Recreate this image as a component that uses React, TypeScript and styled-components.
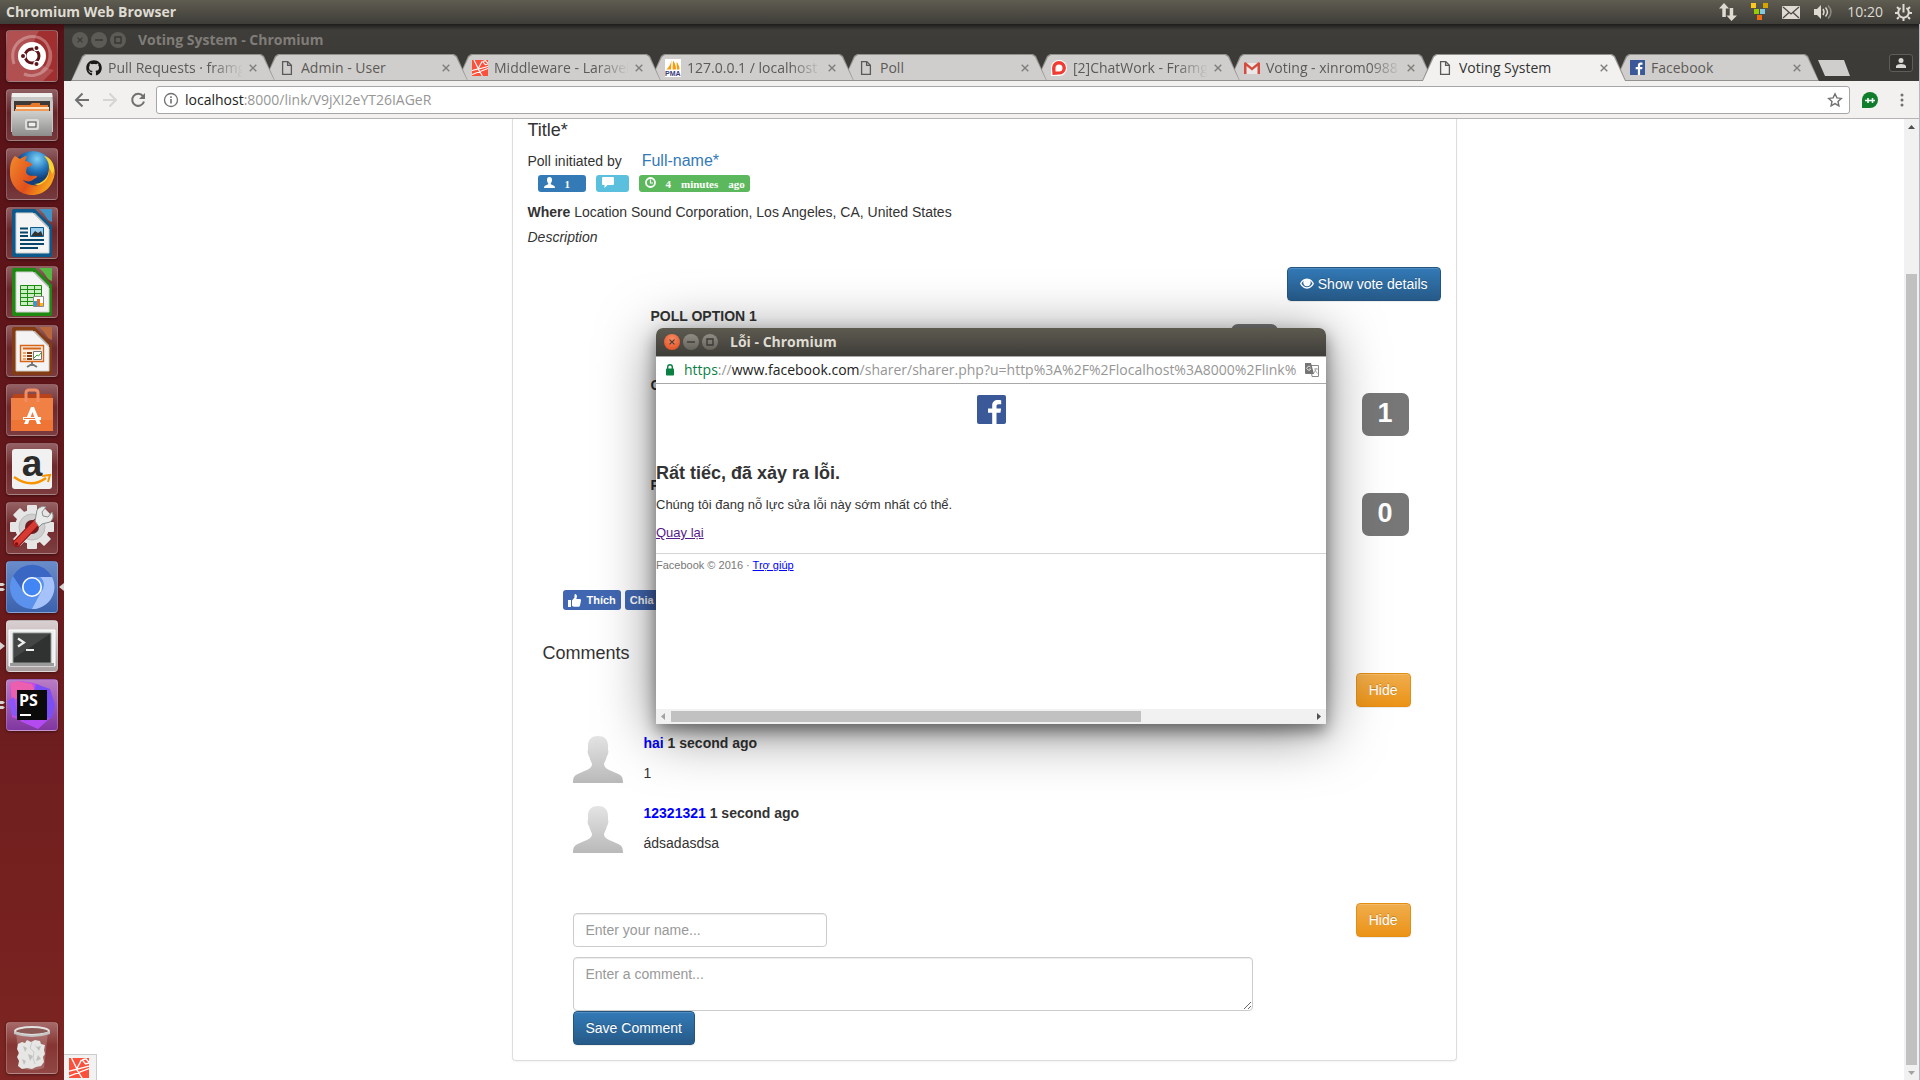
import React from "react";
import styled, { createGlobalStyle, css } from "styled-components";
import { FaGithub } from "react-icons/fa";

const uiFont = `"Open Sans", "Noto Sans", sans-serif`;
const pageFont = `"Liberation Sans", Arial, sans-serif`;

const GlobalStyle = createGlobalStyle`
  * { box-sizing: border-box; }
  body { margin: 0; background: #fff; font-family: ${pageFont}; overflow: hidden; }
  button, input, textarea { font-family: inherit; margin: 0; }
  button { cursor: pointer; }
  svg { display: block; flex: none; }
`;

/* ---------- desktop shell ---------- */

const Desktop = styled.div`
  position: relative;
  height: 100vh;
  display: grid;
  grid-template-rows: 24px minmax(0, 1fr);
  grid-template-columns: 64px minmax(0, 1fr);
`;

const MenuBar = styled.header`
  grid-column: 1 / -1;
  display: flex;
  align-items: center;
  justify-content: space-between;
  padding: 0 8px 0 6px;
  background: linear-gradient(#5f5c51, #3e3d38);
  color: #dfdbd2;
  font: 700 14px/24px ${uiFont};
`;

const Indicators = styled.div`
  display: flex;
  align-items: center;
  gap: 14px;
  font-weight: 400;
  font-size: 14px;
`;

const Clock = styled.span`
  margin-right: -2px;
`;

const Launcher = styled.nav`
  display: flex;
  flex-direction: column;
  gap: 7px;
  padding: 6px 0 6px;
  background: linear-gradient(#3f0c10, #581217 8px, #62171b 40%, #7d2522);
`;

const Slot = styled.div<{ $last?: boolean }>`
  display: grid;
  grid-template-columns: 6px 52px 6px;
  align-items: center;
  ${(p) => p.$last && css`margin-top: auto;`}
`;

const Tile = styled.button<{ $bg?: string }>`
  grid-column: 2;
  width: 52px;
  height: 52px;
  padding: 0;
  border: 1px solid rgba(255, 255, 255, 0.2);
  border-radius: 4px;
  overflow: hidden;
  background: ${(p) => p.$bg || "linear-gradient(rgba(255,255,255,.32), rgba(255,255,255,.08) 45%, rgba(255,255,255,.16))"};
  box-shadow: 0 1px 3px rgba(0, 0, 0, 0.4);
  svg { margin: -1px; }
`;

const Mark = styled.svg<{ $col: number }>`
  grid-column: ${(p) => p.$col};
  grid-row: 1;
`;

/* ---------- main browser window ---------- */

const Browser = styled.main`
  display: flex;
  flex-direction: column;
  min-height: 0;
  background: #fff;
  border-right: 1px solid #b9b7bd;
`;

const TitleBar = styled.div`
  display: flex;
  align-items: center;
  gap: 3px;
  height: 30px;
  padding: 2px 8px 0 8px;
  background: linear-gradient(#1d1c1a, #3e3d3a 6px, #3c3b37);
  color: #807d78;
  font: 700 14px/20px ${uiFont};
`;

const Caption = styled.span`
  margin-left: 9px;
`;

const WindowButton = styled.button<{ $bg: string; $line: string }>`
  display: grid;
  place-items: center;
  width: 16px;
  height: 16px;
  padding: 0;
  border: 0;
  border-radius: 50%;
  background: ${(p) => p.$bg};
  color: ${(p) => p.$line};
`;

const TabStrip = styled.div`
  display: flex;
  align-items: flex-end;
  height: 27px;
  padding: 0 6px 0 7px;
  background: #3c3b37;
`;

const TabShape = styled.div<{ $active?: boolean; $z: number }>`
  position: relative;
  z-index: ${(p) => p.$z};
  flex: 0 1 204px;
  min-width: 0;
  height: 27px;
  margin-right: -11px;
  display: flex;
  align-items: center;
  gap: 6px;
  padding: 0 18px 0 15px;
  color: ${(p) => (p.$active ? "#333" : "#5c5a57")};
  font: 400 14px/20px ${uiFont};
  &::before, &::after {
    content: "";
    position: absolute;
    inset: 0;
    z-index: -1;
    background: #94928f;
    clip-path: polygon(0 100%, 11px 2px, 14px 0, calc(100% - 14px) 0, calc(100% - 11px) 2px, 100% 100%);
  }
  &::after {
    inset: 1px 1px ${(p) => (p.$active ? 0 : 1)}px 1px;
    background: ${(p) => (p.$active ? "#f2f1f0" : "#d0cecc")};
  }
  isolation: isolate;
`;

const TabTitle = styled.span<{ $fade?: boolean }>`
  flex: 1;
  min-width: 0;
  overflow: hidden;
  white-space: nowrap;
  ${(p) => p.$fade && css`mask-image: linear-gradient(90deg, #000 calc(100% - 32px), transparent);`}
`;

const PlainButton = styled.button`
  display: grid;
  place-items: center;
  padding: 0;
  border: 0;
  background: none;
  color: inherit;
`;

const TabClose = styled(PlainButton)`
  color: #807e7b;
`;

const NewTab = styled.button`
  width: 32px;
  height: 16px;
  margin: 0 auto 5px 10px;
  padding: 0;
  border: 0;
  background: #d0cecc;
  clip-path: polygon(0 0, 26px 0, 100% 100%, 7px 100%);
`;

const Profile = styled.button`
  display: grid;
  place-items: center;
  width: 24px;
  height: 18px;
  margin-bottom: 9px;
  padding: 0;
  border: 1px solid #5e5d59;
  border-radius: 3px;
  background: #33322f;
`;

const Toolbar = styled.div`
  display: flex;
  align-items: center;
  gap: 12px;
  height: 38px;
  padding: 0 13px 0 10px;
  background: #f2f1f0;
  border-bottom: 1px solid #b6b4b4;
`;

const Omnibox = styled.div`
  flex: 1;
  display: flex;
  align-items: center;
  gap: 6px;
  height: 28px;
  margin-left: -2px;
  padding: 0 6px 0 6px;
  border: 1px solid #a6a6a6;
  border-radius: 3px;
  background: #fff;
`;

const Address = styled.div`
  flex: 1;
  min-width: 0;
  overflow: hidden;
  white-space: nowrap;
  color: #969696;
  font: 400 14px/20px ${uiFont};
  b { font-weight: 400; color: #222; }
  i { font-style: normal; color: #0b8043; }
`;

const Viewport = styled.div`
  position: relative;
  flex: 1;
  min-height: 0;
  display: flex;
`;

const Page = styled.div`
  flex: 1;
  min-width: 0;
  overflow: hidden;
  font-size: 14px;
  line-height: 20px;
  color: #333;
`;

const VScroll = styled.div`
  display: flex;
  flex-direction: column;
  align-items: center;
  justify-content: space-between;
  width: 15px;
  padding: 4px 0;
  background: #f1f1f1;
`;

const VThumb = styled.div`
  flex: 1;
  width: 11px;
  margin: 144px 0 6px;
  background: #c1c1c1;
`;

const StatusChip = styled.div`
  position: absolute;
  left: 0;
  bottom: 0;
  padding: 3px 7px 2px 5px;
  border: 1px solid #ccc;
  border-width: 1px 1px 0 0;
  background: #f2f2f2;
`;

/* ---------- poll page ---------- */

const Panel = styled.section`
  max-width: 945px;
  margin: 0 auto;
  padding: 0 15px 15px;
  border: 1px solid #ddd;
  border-top: 0;
  border-radius: 0 0 4px 4px;
  box-shadow: 0 1px 2px rgba(0, 0, 0, 0.05);
`;

const PollTitle = styled.h4`
  margin: 0;
  font-weight: 400;
  font-size: 18px;
  line-height: 22px;
`;

const Author = styled.div`
  display: flex;
  gap: 20px;
  margin-top: 10px;
  a { color: #337ab7; font-size: 16px; text-decoration: none; }
`;

const Labels = styled.div`
  display: flex;
  gap: 10px;
  margin-top: 4px;
  padding-left: 10px;
`;

const Label = styled.span<{ $bg: string; $w: number }>`
  display: flex;
  align-items: center;
  gap: 10px;
  min-width: ${(p) => p.$w}px;
  height: 17px;
  padding: 0 5px 0 6px;
  border-radius: 3px;
  background: ${(p) => p.$bg};
  color: #fff;
  font: 700 11px/17px "Liberation Serif", serif;
  svg { margin-top: -2px; }
  span { padding-top: 2px; }
`;

const Where = styled.p`
  margin: 10px 0 5px;
`;

const Description = styled.p`
  margin: 0 0 20px;
  font-style: italic;
`;

const Right = styled.div<{ $inset?: number }>`
  display: flex;
  justify-content: flex-end;
  padding-right: ${(p) => p.$inset || 0}px;
`;

const Button = styled.button<{ $tone: "primary" | "warning" }>`
  display: inline-flex;
  align-items: center;
  gap: 4px;
  height: 34px;
  padding: 0 12px;
  border: 1px solid ${(p) => (p.$tone === "primary" ? "#245580" : "#e38d13")};
  border-radius: 4px;
  background: ${(p) => (p.$tone === "primary" ? "linear-gradient(#337ab7, #265a88)" : "linear-gradient(#f0ad4e, #eb9316)")};
  box-shadow: inset 0 1px 0 rgba(255, 255, 255, 0.15), 0 1px 1px rgba(0, 0, 0, 0.075);
  color: #fff;
  font-size: 14px;
  line-height: 20px;
  text-shadow: 0 -1px 0 rgba(0, 0, 0, 0.2);
`;

const Options = styled.div`
  margin: 5px 0 15px;
`;

const Option = styled.div<{ $height: number; $inset: number }>`
  display: flex;
  justify-content: space-between;
  align-items: flex-start;
  height: ${(p) => p.$height}px;
  padding: 0 ${(p) => p.$inset}px 0 123px;
  font-weight: 700;
`;

const Votes = styled.span`
  width: 47px;
  height: 43px;
  margin-top: 18px;
  border-radius: 7px;
  background: #777;
  color: #fff;
  font-size: 27px;
  line-height: 40px;
  text-align: center;
`;

const Social = styled.div`
  display: flex;
  gap: 4px;
  margin-left: 35px;
`;

const SocialButton = styled.button`
  display: flex;
  align-items: center;
  gap: 6px;
  height: 20px;
  padding: 0 5px;
  border: 0;
  border-radius: 3px;
  background: #4267b2;
  color: #fff;
  font-weight: 700;
  font-size: 11px;
  line-height: 20px;
`;

const CommentsTitle = styled.h4`
  margin: 33px 0 10px 15px;
  font-weight: 400;
  font-size: 18px;
  line-height: 20px;
`;

const CommentList = styled.ul`
  display: grid;
  gap: 20px;
  margin: 26px 0 50px;
  padding: 0 0 0 45px;
  list-style: none;
`;

const Comment = styled.li`
  display: grid;
  grid-template-columns: 50px 1fr;
  gap: 21px;
  align-items: end;
  p { margin: 10px 0 0; }
  em { color: #00f; font-style: normal; }
`;

const Form = styled.form`
  padding-left: 45px;
`;

const FormTop = styled.div`
  display: flex;
  justify-content: space-between;
  padding-right: 30px;
`;

const field = css`
  display: block;
  padding: 6px 12px;
  border: 1px solid #ccc;
  border-radius: 4px;
  background: #fff;
  box-shadow: inset 0 1px 1px rgba(0, 0, 0, 0.075);
  font-size: 14px;
  line-height: 20px;
  &::placeholder { color: #999; opacity: 1; }
`;

const NameInput = styled.input`
  ${field}
  width: 254px;
  height: 34px;
  margin-top: 10px;
`;

const CommentInput = styled.textarea`
  ${field}
  width: calc(100% - 188px);
  height: 54px;
  margin-top: 10px;
`;

/* ---------- popup window ---------- */

const Popup = styled.aside`
  position: absolute;
  left: 656px;
  top: 328px;
  z-index: 20;
  display: flex;
  flex-direction: column;
  width: 670px;
  height: 396px;
  border-radius: 7px 7px 0 0;
  background: #fff;
  box-shadow: 0 7px 16px rgba(0, 0, 0, 0.42), 0 8px 56px rgba(0, 0, 0, 0.5);
  color: #333;
`;

const PopupBar = styled.div`
  display: flex;
  align-items: center;
  gap: 3px;
  height: 28px;
  padding: 0 8px;
  border-radius: 7px 7px 0 0;
  background: linear-gradient(#5d5a50, #3e3d38);
  color: #dfdbd2;
  font: 700 14px/20px ${uiFont};
`;

const PopupUrl = styled.div`
  display: flex;
  align-items: center;
  gap: 8px;
  height: 28px;
  padding: 0 7px 0 8px;
  border: solid #a9a9a9;
  border-width: 1px 0;
`;

const PopupBody = styled.div`
  flex: 1;
  font-size: 13px;
  line-height: 20px;
  p { margin: 0 0 8px; }
`;

const FbHeader = styled.div`
  display: flex;
  justify-content: center;
  padding: 11px 0 39px;
`;

const ErrorTitle = styled.h2`
  margin: 0 0 12px;
  font-size: 18px;
  line-height: 20px;
`;

const BackLink = styled.a`
  color: #551a8b;
`;

const PopupFooter = styled.footer`
  margin-top: 10px;
  padding-top: 1px;
  border-top: 1px solid #d5d5d5;
  color: #777;
  font-size: 11px;
  a { color: #00f; }
`;

const HScroll = styled.div`
  display: flex;
  align-items: center;
  height: 15px;
  padding: 0 5px;
  background: #f1f1f1;
`;

const HThumb = styled.div`
  width: 470px;
  height: 11px;
  margin: 0 auto 0 6px;
  background: #c1c1c1;
`;

/* ---------- small drawings ---------- */

const CloseGlyph = ({ size = 8 }: { size?: number }) => (
  <svg width={size} height={size} viewBox="0 0 8 8" stroke="currentColor" strokeWidth="1.4"><path d="M.7.7l6.6 6.6M7.3.7L.7 7.3" /></svg>
);

const WindowButtons = ({ live }: { live?: boolean }) => {
  const bg = live ? "linear-gradient(#908d84,#65635b)" : "#5d5b56";
  const line = live ? "#3b3a36" : "#373632";
  return (
    <>
      <WindowButton aria-label="Close" $bg={live ? "radial-gradient(circle at 50% 30%,#f78a63,#df4a1b)" : bg} $line={line}>
        <CloseGlyph size={6} />
      </WindowButton>
      <WindowButton aria-label="Minimize" $bg={bg} $line={line}>
        <svg width="8" height="8"><path d="M0 4h8" stroke="currentColor" strokeWidth="1.4" /></svg>
      </WindowButton>
      <WindowButton aria-label="Maximize" $bg={bg} $line={line}>
        <svg width="8" height="8"><path d="M1 1h6v6H1z" fill="none" stroke="currentColor" strokeWidth="1.4" /></svg>
      </WindowButton>
    </>
  );
};

const DocIcon = () => (
  <svg width="16" height="16" viewBox="0 0 16 16" fill="none" stroke="#5a5a5a" strokeWidth="1.3"><path d="M3.6 1.6h5.2l3.6 3.6v9.2H3.6zM8.6 1.8v3.6h3.7" /></svg>
);

const LaravelIcon = ({ size = 16 }: { size?: number }) => (
  <svg width={size} height={size} viewBox="0 0 16 16">
    <path fill="#fb503b" d="M0 0h16v16H0z" />
    <path fill="none" stroke="#fff" strokeWidth="1.1" d="M2 0l4.500 9L16 6.500M0 10.500l6-1.500 4.500 7M0 14.500l16-6M10.500 1.500l3-.8L16 3.500M10.500 1.500l2.800 3.200L16 4M6 9l4-7.500" />
  </svg>
);

const PmaIcon = () => (
  <svg width="16" height="18" viewBox="0 0 16 18">
    <path fill="#fff" d="M0 0h16v18H0z" />
    <path fill="#f89c0e" d="M6.5 1C6 5 4 8 1.5 10.5H6zM8 1.5c2 2.500 3 5 3 9H7.500zM11.500 3c2 2 3 4.500 3 7.500H12z" />
    <text x="0" y="17" fontSize="7" fontWeight="700" fill="#3a3a7a" fontFamily="Liberation Sans">PMA</text>
  </svg>
);

const ChatworkIcon = () => (
  <svg width="16" height="16" viewBox="0 0 16 16">
    <path fill="#fff" d="M8 0a8 8 0 018 8 8 8 0 01-8 8H0V8a8 8 0 018-8z" />
    <path fill="#f03c32" fillRule="evenodd" d="M8 1a7 7 0 017 7 7 7 0 01-7 6.500L1.500 15 1 8a7 7 0 017-7zm0 3.500A3.500 3.500 0 004.500 8v3.500H8a3.500 3.500 0 000-7z" />
  </svg>
);

const GmailIcon = () => (
  <svg width="16" height="16" viewBox="0 0 16 16">
    <path fill="#e8e8e8" d="M1 3h14v11H1z" />
    <path fill="#d54b3d" d="M0 3.500C0 2.500 1.500 2 2.300 2.700L8 7.500l5.700-4.800C14.500 2 16 2.500 16 3.500V14h-2.500V6L8 10.500 2.500 6v8H0z" />
  </svg>
);

const FbIcon = ({ size, r = 0 }: { size: number; r?: number }) => (
  <svg width={size} height={size} viewBox="0 0 29 29">
    <rect width="29" height="29" rx={r} fill="#3b5998" />
    <path fill="#fff" d="M15.200 29V17.800h-4.200V13.500h4.200v-3c0-3.600 2.300-5.500 5.600-5.500 1.600 0 3 .1 3.400.2v4h-2.500c-1.900 0-2.200.9-2.200 2.200v2.100h4.600l-.6 4.300h-4v11.200z" />
  </svg>
);

const svgTile = { width: 52, height: 52, viewBox: "0 0 52 52" };

const UbuntuArt = () => (
  <svg {...svgTile}>
    <path d="M0 0h52v52H0z" fill="#a12f30" />
    <path d="M0 0h34A24 24 0 0048 40l-12 12H0z" fill="#fff" opacity=".16" />
    <path d="M8 34C2 14 20 2 34 8c12 6 14 24 2 34M44 20c4 18-12 30-26 24" fill="none" stroke="#fff" opacity=".3" strokeWidth="3" />
    <circle cx="26" cy="26" r="14" fill="#fff" />
    <circle cx="26" cy="26" r="7" fill="none" stroke="#5d1519" strokeWidth="3" />
    <g stroke="#fff" strokeWidth="1.200" fill="#5d1519"><circle cx="17" cy="26" r="2.600" /><circle cx="30.500" cy="18" r="2.600" /><circle cx="30.500" cy="34" r="2.600" /></g>
  </svg>
);

const FilesArt = () => (
  <svg {...svgTile}>
    <defs><linearGradient id="steel" x2="0" y2="1"><stop stopColor="#d0d0cf" /><stop offset="1" stopColor="#8d8d8c" /></linearGradient></defs>
    <path d="M6 4h40l1 9v30H5V13z" fill="#c7c7c6" /><path d="M6 4h40l.5 4h-41z" fill="#efefee" />
    <path d="M8 12h36v11H8z" fill="#3d3a38" />
    <path d="M10 16h14l2-2h8v2h8v8H10z" fill="#e8782c" /><path d="M10 18h33v2H10z" fill="#fbe2c4" /><path d="M9 20h34v3H9z" fill="#f09a55" />
    <path d="M6 22h40v25H8q-2 0-2-2z" fill="url(#steel)" />
    <rect x="19" y="30" width="14" height="11" rx="2" fill="#dcdcdb" /><rect x="22" y="33" width="8" height="5" fill="#eee" stroke="#444" />
  </svg>
);

const FirefoxArt = () => (
  <svg {...svgTile}>
    <defs>
      <radialGradient id="globe" cx=".6" cy=".2"><stop stopColor="#7fd3f5" /><stop offset=".6" stopColor="#2274bb" /><stop offset="1" stopColor="#123e7c" /></radialGradient>
      <linearGradient id="fox" x2="1" y2=".5"><stop stopColor="#f28a2c" /><stop offset=".6" stopColor="#e1501c" /><stop offset="1" stopColor="#f7a01b" /></linearGradient>
    </defs>
    <circle cx="27" cy="23" r="20" fill="url(#globe)" />
    <path d="M38 8c4 4 5 8 5 12 0 10-7 16-15 16C40 40 50 34 48.500 22 48 15 44 9 38 8z" fill="#fbd22f" />
    <path d="M43 20c1 13-8 19-17 17-6-1-9-5-9-5 4 2 8 2 11-1 1-1 3-1 3-3-3-1-7 1-10-2-2-3 0-5 0-7 2 0 5-1 5-3-2-1-4-3-7-3l2-5c-3 0-5 2-7 3L9 8C4 13 4 20 4 25c0 13 10 22 22 22 13 0 23-10 22-24-1 2-2 3-2 3-1-3-2-5-3-6z" fill="url(#fox)" />
  </svg>
);

const OfficeArt = ({ c, light, children }: { c: string; light: string; children: React.ReactNode }) => (
  <svg {...svgTile}>
    <path d="M8 2h21l17 17v29q0 2-2 2H8q-2 0-2-2V4q0-2 2-2z" fill={c} />
    <path d="M33 2h13v13q-4-1-6-5t-7-8z" fill={light} />
    <path d="M10 6h17l16 16v24H10z" fill="#f4f4f4" stroke="#cfcfcf" /><path d="M27 6l16 16V20L29 6z" fill="#bbb" />
    {children}
  </svg>
);

const WriterArt = () => (
  <OfficeArt c="#0c5a8d" light="#3f93c6">
    <path d="M14 21.500h8M14 25.500h8M14 29h8M14 33h24M14 37h24M14 41h18" stroke="#074668" strokeWidth="2" />
    <path d="M24.500 20.500h13v9h-13z" fill="#9ccdea" stroke="#0c5a8d" /><path d="M25 29l4-5 3 2 3-2 2 5z" fill="#333" />
  </OfficeArt>
);

const CalcArt = () => (
  <OfficeArt c="#1f8a12" light="#55b944">
    <path d="M14.500 19.500h21v20h-21z" fill="#c9eec1" stroke="#1f8a12" />
    <path d="M14 23.500h22M14 27.500h22M14 31.500h22M14 35.500h22M21.500 19v21M28.500 19v21" stroke="#1f8a12" />
    <path d="M27.500 30.500h10v10h-10z" fill="#fff" stroke="#888" /><path d="M28 35h3v5h-3z" fill="#2b9be3" /><path d="M31 33h3v7h-3z" fill="#e96a23" /><path d="M34 37h3v3h-3z" fill="#f2bb19" />
  </OfficeArt>
);

const ImpressArt = () => (
  <OfficeArt c="#843c12" light="#b8683a">
    <path d="M14.500 20.500h23v16h-23z" fill="#fdeee2" stroke="#d4661b" strokeWidth="1.400" />
    <path d="M17 23.500h18" stroke="#d4661b" strokeWidth="2" /><path d="M17 28h3M17 31h3M17 34h3" stroke="#e98a4c" strokeWidth="1.500" /><path d="M21 28h5M21 31h5M21 34h5" stroke="#843c12" strokeWidth="2" />
    <path d="M27.500 26.500h8v8h-8z" fill="#fff" stroke="#777" /><path d="M28 33l3-3 1.500 1 2.500-3" fill="none" stroke="#2fa52f" /><path d="M26 37v2l-5 3M26 39l5 3" fill="none" stroke="#777" strokeWidth="2" />
  </OfficeArt>
);

const SoftwareArt = () => (
  <svg {...svgTile}>
    <path d="M8 10h37l2 5H5z" fill="#b6431a" /><path d="M5 14h42v33H5z" fill="#ee7536" /><path d="M5 14h42v22H5z" fill="#f2874d" opacity=".6" />
    <path d="M20 18V9q0-3 3-3h6q3 0 3 3v9" fill="none" stroke="#f08d64" strokeWidth="3" />
    <path d="M22 40l-4 0 7-17h3l7 17h-4l-4.500-12z" fill="#fff" /><path d="M17 33h18v3H17z" fill="#fff" />
    <path d="M18 34.500h11" stroke="#ee7536" strokeWidth="1.200" />
  </svg>
);

const AmazonArt = () => (
  <svg {...svgTile}>
    <rect x="6" y="6" width="40" height="40" rx="3" fill="#f1f1f1" />
    <text x="26" y="33" textAnchor="middle" fontSize="37" fontWeight="700" fill="#2b2b2b" fontFamily="Liberation Sans">a</text>
    <path d="M8 34q17 12 32 1" fill="none" stroke="#f79400" strokeWidth="2.400" /><path d="M36 33l8-1-2 7" fill="none" stroke="#f79400" strokeWidth="2" />
  </svg>
);

const SettingsArt = () => (
  <svg {...svgTile}>
    <g transform="translate(26 25)" fill="#e6e6e6">
      {[0, 45, 90, 135].map((a) => <rect key={a} x="-5" y="-22" width="10" height="44" rx="1" transform={`rotate(${a})`} />)}
      <circle r="17" /><circle r="13" fill="#cfcfcf" stroke="#bbb" /><circle r="7" fill="#6c1f24" />
    </g>
    <path d="M11 41l19-20" stroke="#8d1212" strokeWidth="8" strokeLinecap="round" /><path d="M11 41l19-20" stroke="#d63a33" strokeWidth="6" strokeLinecap="round" />
    <path d="M29 19l2-11q4-5 9-3l-4 5 1 4 5 1 4-5q3 6-2 10l-8 2-3 3z" fill="#e9eaea" stroke="#8a8f8d" />
    <circle cx="10.500" cy="42" r="1.800" fill="#7c1010" />
  </svg>
);

const ChromiumArt = () => (
  <svg {...svgTile}>
    <circle cx="26" cy="26" r="22" fill="#5b92ee" />
    <path d="M7 15A22 22 0 0146 16H26a10 10 0 00-9 14z" fill="#3a66c4" />
    <path d="M46 16a22 22 0 01-20 32l9-17a10 10 0 00-1-15z" fill="#a5c3fa" />
    <circle cx="26" cy="26" r="10" fill="#fff" /><circle cx="26" cy="26" r="8.400" fill="#4285f4" />
  </svg>
);

const TerminalArt = () => (
  <svg {...svgTile}>
    <path d="M3 10h46v36H3z" fill="#eee" stroke="#fff" /><path d="M4 43h44v3H4z" fill="#9a9a9a" /><path d="M7 13h38v30H7z" fill="#2f3231" stroke="#999" />
    <path d="M8 14h36L8 38z" fill="#fff" opacity=".1" />
    <path d="M12 18.500l6 4-6 4M20 30h8" fill="none" stroke="#eee" strokeWidth="2.200" />
  </svg>
);

const PhpStormArt = () => (
  <svg {...svgTile}>
    <path d="M4 4l10-2 14 2 6 2-4 38-14-2-10-4z" fill="#c44be8" /><path d="M4 4l8-2 14 3 4 8-24 8z" fill="#ec5fae" />
    <path d="M30 5l14 5 5 16-3 12-14 11-14-6z" fill="#7b4ef5" /><path d="M2 22l6-4 4 20-6-2z" fill="#8a56f7" /><path d="M14 42l30-3-12 11z" fill="#b44bf0" />
    <path d="M11 11h30v30H11z" fill="#0b0b0b" />
    <text x="13" y="27" fontSize="16" fontWeight="700" fill="#fff" fontFamily="Open Sans">PS</text><path d="M14 36h11" stroke="#fff" strokeWidth="2" />
  </svg>
);

const TrashArt = () => (
  <svg {...svgTile}>
    <path d="M10 10h32l-4 36q-12 4-24 0z" fill="#fff" opacity=".2" />
    <path d="M12 22l4-2 3 1 2-3 4 2 4-2 5 1 1 3 4 1-1 5 1 4-2 3 1 5-3 4-5 1-4 2-5-1-5 1-4-3 1-5-2-4 2-4-2-4z" fill="#e6e6e4" />
    <path d="M17 24l4 2-2 4zM28 22l3 3 4-1-2 5zM22 32l5 2-3 5zM32 33l3 4-5 2zM16 37l4 2-2 4z" fill="#bfc0be" />
    <path d="M26 20l-2 6 4 4-1 6 2 6" fill="none" stroke="#cacac8" />
    <ellipse cx="26" cy="9" rx="17" ry="4" fill="#8b5a57" stroke="#e2e2e0" strokeWidth="2" />
    <path d="M8 9q18 8 36 0v3q-18 6-36 0z" fill="#c6c7c5" />
  </svg>
);

const Avatar = () => (
  <svg width="50" height="47" viewBox="0 0 50 47">
    <defs><linearGradient id="person" x2="0" y2="1"><stop stopColor="#e4e4e4" /><stop offset="1" stopColor="#b9b9b9" /></linearGradient></defs>
    <path fill="url(#person)" d="M15 10C15 3 19 0 25 0s10 3 10 10v4c1 1 0 5-1 6-1 4-3 7-3 8 0 5 6 6 12 9 5 2 7 3 7 10H0c0-7 2-8 7-10 6-3 12-4 12-9 0-1-2-4-3-8-1-1-2-5-1-6z" />
  </svg>
);

const launcherItems = [
  { name: "Dash", art: <UbuntuArt /> },
  { name: "Files", art: <FilesArt /> },
  { name: "Firefox", art: <FirefoxArt /> },
  { name: "Writer", art: <WriterArt /> },
  { name: "Calc", art: <CalcArt /> },
  { name: "Impress", art: <ImpressArt /> },
  { name: "Software", art: <SoftwareArt /> },
  { name: "Amazon", art: <AmazonArt /> },
  { name: "Settings", art: <SettingsArt /> },
  { name: "Chromium", art: <ChromiumArt />, bg: "linear-gradient(#6a8cc9,#3c62ad)", mark: "double", focused: true },
  { name: "Terminal", art: <TerminalArt />, bg: "linear-gradient(#d9cfd0,#a79fa0)", mark: "arrow" },
  { name: "PhpStorm", art: <PhpStormArt />, bg: "linear-gradient(#b97cc5,#8136a0)", mark: "double" },
  { name: "Trash", art: <TrashArt />, last: true },
];

const tabs = [
  { title: "Pull Requests · framgia", icon: <FaGithub size={16} color="#1b1817" />, fade: true },
  { title: "Admin - User", icon: <DocIcon /> },
  { title: "Middleware - Laravel", icon: <LaravelIcon />, fade: true },
  { title: "127.0.0.1 / localhost", icon: <PmaIcon />, fade: true },
  { title: "Poll", icon: <DocIcon /> },
  { title: "[2]ChatWork - Framgia", icon: <ChatworkIcon />, fade: true },
  { title: "Voting - xinrom0988", icon: <GmailIcon />, fade: true },
  { title: "Voting System", icon: <DocIcon />, active: true },
  { title: "Facebook", icon: <FbIcon size={15} /> },
];

const options = [
  { label: "POLL OPTION 1", votes: 1, height: 69, inset: 163 },
  { label: "OPTION 2", votes: 1, height: 100, inset: 32 },
  { label: "POLL OPTION 3", votes: 0, height: 100, inset: 32 },
];

const comments = [
  { name: "hai", text: "1" },
  { name: "12321321", text: "ádsadasdsa" },
];

export default function App() {
  return (
    <>
      <GlobalStyle />
      <Desktop>
        <MenuBar>
          <span>Chromium Web Browser</span>
          <Indicators>
            <svg width="18" height="18" viewBox="0 0 18 18" fill="#dfdbd2"><path d="M5 0l5 5.500H6.800V14H3.300V5.500H0zM12.500 18l-5-5.500h3.200V5h3.500v7.500H18z" /></svg>
            <svg width="17" height="18" viewBox="0 0 17 18"><path fill="#fcc81d" d="M0 0h5v5H0z" /><path fill="#d4a500" d="M12 0h5v5h-5z" /><path fill="#9c0" d="M3 6h5v5H3z" /><path fill="#82c8e0" d="M9 6h5v5H9z" /><path fill="#f26b0f" d="M6 12h5v5H6z" /></svg>
            <svg width="18" height="13" viewBox="0 0 18 13"><rect width="18" height="13" rx="1" fill="#dfdbd2" /><path d="M1 1l8 7 8-7M1 12l6-5.500M17 12l-6-5.500" fill="none" stroke="#4c4a43" strokeWidth="1.300" /></svg>
            <svg width="19" height="16" viewBox="0 0 19 16"><path fill="#dfdbd2" d="M0 5h3l4-4v14l-4-4H0z" /><path d="M9 5q2 3 0 6M11.500 3.500q4 4.500 0 9" fill="none" stroke="#dfdbd2" strokeWidth="1.500" /><path d="M14 1.500q6 6.500 0 13" fill="none" stroke="#8b8980" strokeWidth="1.500" /></svg>
            <Clock>10:20</Clock>
            <svg width="17" height="17" viewBox="0 0 17 17" fill="none" stroke="#dfdbd2"><path d="M5.600 4a5.300 5.300 0 105.800 0" strokeWidth="2" /><path d="M8.500 0v8.500" strokeWidth="2" /><path d="M2 3l2 2M15 3l-2 2M0 9h3M17 9h-3M2 15l2-2M15 15l-2-2M8.500 14v3" strokeWidth="2" /></svg>
          </Indicators>
        </MenuBar>

        <Launcher aria-label="Launcher">
          {launcherItems.map((item) => (
            <Slot key={item.name} $last={item.last}>
              {item.mark && (
                <Mark $col={1} width="5" height="8" viewBox="0 0 5 8" fill="#d8d3d3">
                  {item.mark === "arrow" ? <path d="M0 0l5 4-5 4z" /> : <path d="M0 0h3l2 1.500L3 3H0zM0 5h3l2 1.500L3 8H0z" />}
                </Mark>
              )}
              <Tile aria-label={item.name} $bg={item.bg}>{item.art}</Tile>
              {item.focused && <Mark $col={3} width="6" height="8" viewBox="0 0 6 8" fill="#d8d3d3"><path d="M6 0L1 4l5 4z" /></Mark>}
            </Slot>
          ))}
        </Launcher>

        <Browser>
          <TitleBar>
            <WindowButtons />
            <Caption>Voting System - Chromium</Caption>
          </TitleBar>
          <TabStrip>
            {tabs.map((tab, i) => (
              <TabShape key={tab.title} $active={tab.active} $z={tab.active ? 12 : 10 - i}>
                {tab.icon}
                <TabTitle $fade={tab.fade}>{tab.title}</TabTitle>
                <TabClose aria-label="Close tab"><CloseGlyph /></TabClose>
              </TabShape>
            ))}
            <NewTab aria-label="New tab" />
            <Profile aria-label="Profile">
              <svg width="10" height="10" viewBox="0 0 10 10" fill="#dad8d6"><circle cx="5" cy="2.600" r="2.500" /><path d="M0 10V8q1-2 5-2t5 2v2z" /></svg>
            </Profile>
          </TabStrip>
          <Toolbar>
            <PlainButton aria-label="Back"><svg width="16" height="16" viewBox="0 0 16 16" fill="none" stroke="#707070" strokeWidth="2"><path d="M15 8H2.500M8.500 1.500L2 8l6.500 6.500" /></svg></PlainButton>
            <PlainButton aria-label="Forward"><svg width="16" height="16" viewBox="0 0 16 16" fill="none" stroke="#d6d5d4" strokeWidth="2"><path d="M1 8h12.500M7.500 1.500L14 8l-6.500 6.500" /></svg></PlainButton>
            <PlainButton aria-label="Reload"><svg width="16" height="16" viewBox="0 0 16 16"><path d="M13 4.200A6 6 0 1014 9.500" fill="none" stroke="#707070" strokeWidth="2" /><path d="M15 1v6H9z" fill="#707070" /></svg></PlainButton>
            <Omnibox>
              <svg width="16" height="16" viewBox="0 0 16 16"><circle cx="8" cy="8" r="6.500" fill="none" stroke="#707070" strokeWidth="1.300" /><path d="M7.200 7h1.600v4.500H7.200zM7.200 4.300h1.600v1.600H7.200z" fill="#707070" /></svg>
              <Address role="textbox" aria-label="Address"><b>localhost</b>:8000/link/V9jXI2eYT26IAGeR</Address>
              <PlainButton aria-label="Bookmark"><svg width="16" height="16" viewBox="0 0 16 16" fill="none" stroke="#707070" strokeWidth="1.400"><path d="M8 1.800l1.900 4.100 4.400.5-3.300 3 .9 4.400L8 11.600l-3.900 2.200.9-4.400-3.300-3 4.400-.5z" /></svg></PlainButton>
            </Omnibox>
            <PlainButton aria-label="Hangouts"><svg width="16" height="16" viewBox="0 0 16 16"><path d="M8 0a8 8 0 010 16H0V8a8 8 0 018-8z" fill="#0f7d2c" /><path d="M3 8.500h10M6 6v5M10.500 6v5" stroke="#fff" strokeWidth="1.500" /></svg></PlainButton>
            <PlainButton aria-label="Menu"><svg width="16" height="16" viewBox="0 0 16 16" fill="#707070"><circle cx="12" cy="3" r="1.500" /><circle cx="12" cy="8" r="1.500" /><circle cx="12" cy="13" r="1.500" /></svg></PlainButton>
          </Toolbar>

          <Viewport>
            <Page>
              <Panel>
                <PollTitle>Title*</PollTitle>
                <Author><span>Poll initiated by</span><a href="#author">Full-name*</a></Author>
                <Labels>
                  <Label $bg="#337ab7" $w={48}>
                    <svg width="11" height="11" viewBox="0 0 11 11" fill="#fff"><path d="M5.500 0C7.300 0 8 1.200 8 3c0 1.500-.7 2.500-1.200 3.300v1L10 8.700q1 .5 1 2.300H0q0-1.800 1-2.300l3.200-1.400v-1C3.700 5.500 3 4.500 3 3c0-1.800.7-3 2.500-3z" /></svg>
                    <span>1</span>
                  </Label>
                  <Label $bg="#5bc0de" $w={33}>
                    <svg width="12" height="11" viewBox="0 0 12 11" fill="#fff"><path d="M1 0h10q1 0 1 1v6q0 1-1 1H5.500L2.500 11V8H1Q0 8 0 7V1q0-1 1-1z" /></svg>
                  </Label>
                  <Label $bg="#5cb85c" $w={111}>
                    <svg width="11" height="11" viewBox="0 0 11 11" fill="none" stroke="#fff"><circle cx="5.500" cy="5.500" r="4.500" strokeWidth="1.800" /><path d="M5.500 2.500V6H8" strokeWidth="1.200" /></svg>
                    <span>4</span><span>minutes</span><span>ago</span>
                  </Label>
                </Labels>
                <Where><strong>Where</strong> Location Sound Corporation, Los Angeles, CA, United States</Where>
                <Description>Description</Description>
                <Right>
                  <Button $tone="primary">
                    <svg width="14" height="12" viewBox="0 0 15 12"><path d="M7.500 0C3.500 0 1 3.200 0 5.500 1.200 8.500 4 11 7.500 11S13.800 8.500 15 5.500C14 3.200 11.500 0 7.500 0zm0 9.500C5 9.500 2.800 8 1.600 5.500 2.200 4.300 3 3.300 4 2.500a4 4 0 107 0c1 .8 1.800 1.800 2.400 3C12.200 8 10 9.500 7.500 9.500z" fill="#fff" fillRule="evenodd" /><path d="M5 4.500A2.500 2.500 0 017.500 2" stroke="#fff" strokeWidth="1.200" fill="none" /></svg>
                    Show vote details
                  </Button>
                </Right>
                <Options>
                  {options.map((o) => (
                    <Option key={o.label} $height={o.height} $inset={o.inset}>
                      <span>{o.label}</span><Votes>{o.votes}</Votes>
                    </Option>
                  ))}
                </Options>
                <Social>
                  <SocialButton>
                    <svg width="13" height="13" viewBox="0 0 13 13" fill="#fff"><path d="M0 6h3v7H0zM4 6.500L6.500 3.500V1q0-1 1-1Q9 .5 9 2.500L8.300 5H12q1.200.3 1 1.500l-1 5q-.3 1.200-1.500 1.200H6L4 12z" /></svg>
                    Thích
                  </SocialButton>
                  <SocialButton>Chia sẻ</SocialButton>
                </Social>
                <CommentsTitle>Comments</CommentsTitle>
                <Right $inset={30}><Button $tone="warning">Hide</Button></Right>
                <CommentList>
                  {comments.map((c) => (
                    <Comment key={c.name}>
                      <Avatar />
                      <div><strong><em>{c.name}</em> 1 second ago</strong><p>{c.text}</p></div>
                    </Comment>
                  ))}
                </CommentList>
                <Form onSubmit={(e) => e.preventDefault()}>
                  <FormTop>
                    <NameInput aria-label="Name" placeholder="Enter your name..." />
                    <Button type="button" $tone="warning">Hide</Button>
                  </FormTop>
                  <CommentInput aria-label="Comment" placeholder="Enter a comment..." />
                  <Button $tone="primary">Save Comment</Button>
                </Form>
              </Panel>
            </Page>
            <VScroll>
              <svg width="7" height="7"><path d="M0 6l3.500-4L7 6z" fill="#505050" /></svg>
              <VThumb />
              <svg width="7" height="5"><path d="M0 0h7L3.500 4z" fill="#a3a3a3" /></svg>
            </VScroll>
            <StatusChip><LaravelIcon size={20} /></StatusChip>
          </Viewport>
        </Browser>

        <Popup>
          <PopupBar>
            <WindowButtons live />
            <Caption>Lỗi - Chromium</Caption>
          </PopupBar>
          <PopupUrl>
            <svg width="12" height="14" viewBox="0 0 12 14"><rect x="2" y="5.500" width="8" height="7" rx=".8" fill="#0b8043" /><path d="M3.700 6V4a2.300 2.300 0 014.600 0v2" fill="none" stroke="#0b8043" strokeWidth="1.400" /></svg>
            <Address role="textbox" aria-label="Popup address"><i>https</i>://<b>www.facebook.com</b>/sharer/sharer.php?u=http%3A%2F%2Flocalhost%3A8000%2Flink%2FV9jXI2eYT26IAGeR</Address>
            <svg width="14" height="14" viewBox="0 0 14 14"><path d="M6 2.500h7.500v11H7z" fill="#fff" stroke="#8a8a8a" /><path d="M0 0h6l3 11H1q-1 0-1-1z" fill="#757575" /><path d="M5.500 4A2 2 0 105.800 6H4" fill="none" stroke="#ddd" /><path d="M9 6h4M11 5v1l-2 4M10 7l2.500 3.500" fill="none" stroke="#999" strokeWidth=".8" /></svg>
          </PopupUrl>
          <PopupBody>
            <FbHeader><FbIcon size={29} r={2} /></FbHeader>
            <ErrorTitle>Rất tiếc, đã xảy ra lỗi.</ErrorTitle>
            <p>Chúng tôi đang nỗ lực sửa lỗi này sớm nhất có thể.</p>
            <BackLink href="#back">Quay lại</BackLink>
            <PopupFooter>Facebook © 2016 · <a href="#help">Trợ giúp</a></PopupFooter>
          </PopupBody>
          <HScroll>
            <svg width="4" height="7"><path d="M4 0v7L0 3.500z" fill="#a3a3a3" /></svg>
            <HThumb />
            <svg width="4" height="7"><path d="M0 0v7l4-3.500z" fill="#505050" /></svg>
          </HScroll>
        </Popup>
      </Desktop>
    </>
  );
}
